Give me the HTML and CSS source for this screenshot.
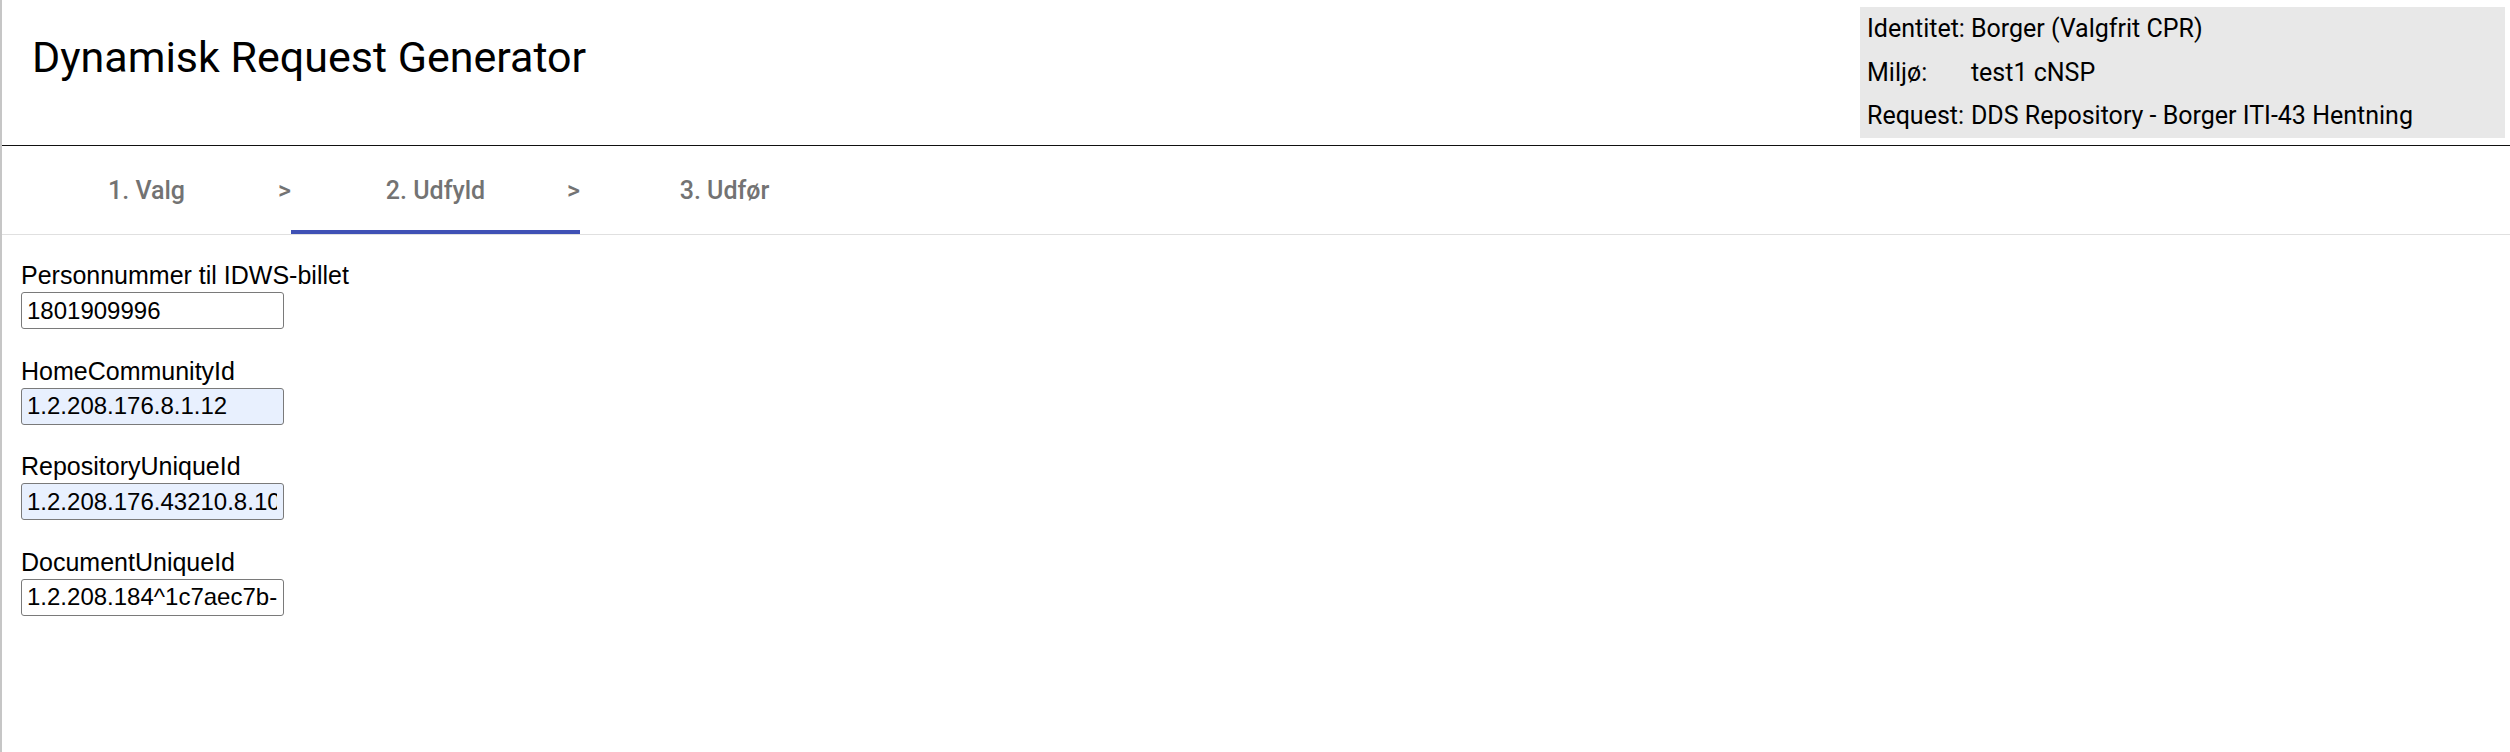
FILE: index.html
```html
<!DOCTYPE HTML>
<html lang="da">
<head>
	<title>Dynamisk Request Generator</title>
	<meta charset="UTF-8">
	<link rel="stylesheet" href="styles.css">
</head>
<body>

<header class="topbar">
	<h1 class="app-title">Dynamisk Request Generator</h1>
	<div class="context-box">
		<span class="ctx-key">Identitet:</span><span class="ctx-val">Borger (Valgfrit CPR)</span>
		<span class="ctx-key">Miljø:</span><span class="ctx-val">test1 cNSP</span>
		<span class="ctx-key">Request:</span><span class="ctx-val">DDS Repository - Borger ITI-43 Hentning</span>
	</div>
</header>

<nav class="steps">
	<div class="step">
		<span class="step-label">1. Valg</span>
		<span class="step-sep">&gt;</span>
	</div>
	<div class="step active">
		<span class="step-label">2. Udfyld</span>
		<span class="step-sep">&gt;</span>
	</div>
	<div class="step">
		<span class="step-label">3. Udfør</span>
	</div>
</nav>

<form class="fields">
	<div class="field">
		<label for="cpr">Personnummer til IDWS-billet</label>
		<input id="cpr" type="text" value="1801909996">
	</div>
	<div class="field">
		<label for="hcid">HomeCommunityId</label>
		<input id="hcid" class="autofilled" type="text" value="1.2.208.176.8.1.12">
	</div>
	<div class="field">
		<label for="repo">RepositoryUniqueId</label>
		<input id="repo" class="autofilled" type="text" value="1.2.208.176.43210.8.10.12">
	</div>
	<div class="field">
		<label for="doc">DocumentUniqueId</label>
		<input id="doc" type="text" value="1.2.208.184^1c7aec7b-5c1e-4a3f-9b2d-3e8f7a6c1d90">
	</div>
</form>

</body>
</html>
```

FILE: styles.css
```css
	body {
		margin: 0;
		min-height: 100vh;
		box-sizing: border-box;
		border-left: 2px solid #c6c6c6;
		background-color: white;
		color: black;
		font-family: Roboto, "Liberation Sans", sans-serif;
}
	.topbar {
		display: flex;
		justify-content: space-between;
		align-items: flex-start;
		height: 145px;
		border-bottom: 1px solid #111;
}
	.app-title {
		margin: 0;
		padding: 32px 0 0 30px;
		font-size: 43px;
		font-weight: 400;
		line-height: normal;
}
	.context-box {
		display: grid;
		grid-template-columns: auto 1fr;
		column-gap: 6px;
		width: 645px;
		box-sizing: border-box;
		margin: 7px 5px 0 0;
		padding-left: 7px;
		background-color: #e8e8e8;
		font-size: 25px;
		line-height: 43.6px;
}
	.steps {
		display: grid;
		grid-template-columns: repeat(3, 289px);
		height: 88px;
		border-bottom: 1px solid #e0e0e0;
}
	.step {
		display: grid;
		grid-template-columns: 1fr auto 1fr;
		align-items: center;
		color: #737373;
		font-size: 25px;
		font-weight: 500;
}
	.step-label {
		grid-column: 2;
}
	.step-sep {
		grid-column: 3;
		justify-self: end;
}
	.step.active {
		box-shadow: inset 0 -4px 0 #3f51b5;
}
	.fields {
		padding: 28px 0 0 19px;
		font-family: "Liberation Sans", Arial, sans-serif;
}
	.field {
		margin-bottom: 29.5px;
}
	.field label {
		display: block;
		margin-bottom: 4px;
		font-size: 25px;
		line-height: 25px;
}
	.field input {
		display: block;
		width: 263px;
		height: 37px;
		box-sizing: border-box;
		margin: 0;
		padding: 0 6px 0 5px;
		border: 1px solid #7a7a7a;
		border-radius: 3px;
		background-color: white;
		font-family: "Liberation Sans", Arial, sans-serif;
		font-size: 24px;
		color: black;
}
	.field input.autofilled {
		background-color: #e8f0fe;
}
```
